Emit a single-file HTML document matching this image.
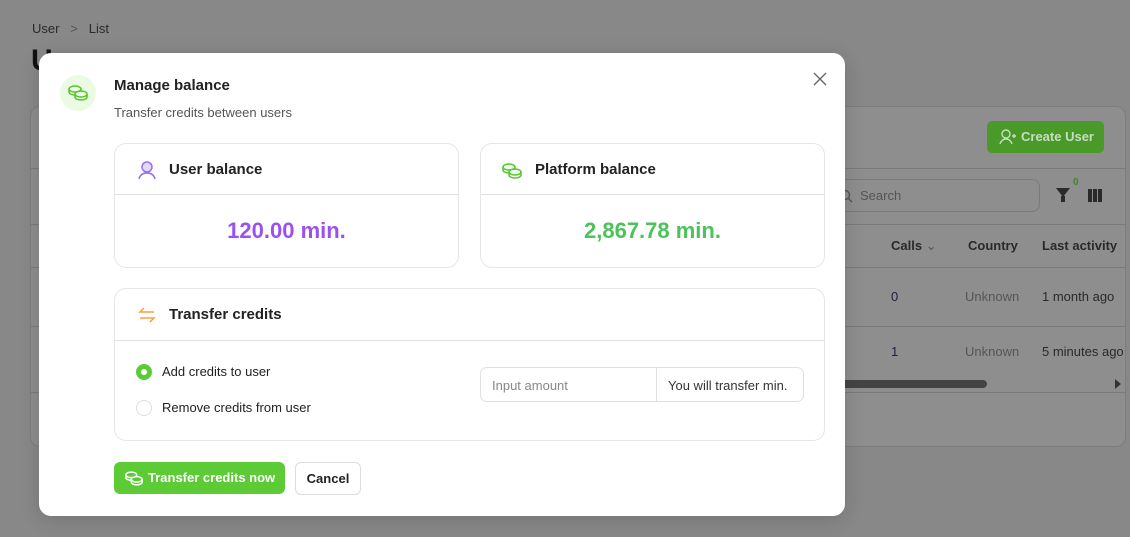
<!DOCTYPE html>
<html><head><style>
*{box-sizing:border-box;margin:0;padding:0}
body{width:1130px;height:537px;overflow:hidden;background:#888;font-family:"Liberation Sans",sans-serif;position:relative;color:#1a1a1a}
.a{position:absolute}
.bg{color:#2a2a2a;font-size:13px}
.card{position:absolute;background:#fff;border:1px solid #e6e6e6;border-radius:12px}
.hl{position:absolute;left:0;right:0;height:1px;background:#e0e0e0}
</style></head><body>
<div class="a bg" style="left:32px;top:21px">User&nbsp;&nbsp;&nbsp;<span style="color:#555">&gt;</span>&nbsp;&nbsp;&nbsp;List</div>
<div class="a" style="left:31px;top:44px;font-size:30px;font-weight:bold;color:#111">U</div>
<div class="a" style="left:30px;top:106px;width:1096px;height:341px;background:#8e8e8e;border:1px solid #7d7d7d;border-radius:10px">
 <div class="a" style="left:0;right:0;top:61px;height:1px;background:#7a7a7a"></div>
 <div class="a" style="left:0;right:0;top:117px;height:1px;background:#7a7a7a"></div>
 <div class="a" style="left:0;right:0;top:160px;height:1px;background:#7a7a7a"></div>
 <div class="a" style="left:0;right:0;top:219px;height:1px;background:#7a7a7a"></div>
 <div class="a" style="left:0;right:0;top:285px;height:1px;background:#7a7a7a"></div>
</div>
<div class="a" style="left:987px;top:121px;width:117px;height:32px;background:#4a9a2a;border-radius:5px;color:#c8dcc0;font-size:13px;font-weight:bold;line-height:32px;padding-left:34px">Create User
 <svg class="a" style="left:12px;top:8px" width="18" height="16" viewBox="0 0 18 16" fill="none" stroke="#c8dcc0" stroke-width="1.4"><circle cx="7" cy="5" r="4"/><path d="M1 15c1-3 3-5 6-5s5 2 6 5M13 7h4M15 5v4"/></svg></div>
<div class="a" style="left:830px;top:179px;width:210px;height:33px;border:1px solid #7a7a7a;border-radius:8px;color:#555;font-size:13px;line-height:31px;padding-left:29px">Search
 <svg class="a" style="left:8px;top:9px" width="14" height="14" viewBox="0 0 14 14" fill="none" stroke="#555" stroke-width="1.4"><circle cx="6" cy="6" r="4.5"/><path d="M9.5 9.5l3.5 3.5"/></svg></div>
<div class="a" style="left:1056px;top:188px;width:0;height:0;border-left:7px solid transparent;border-right:7px solid transparent;border-top:9px solid #2a2a2a"></div>
<div class="a" style="left:1061px;top:196px;width:4px;height:6px;background:#2a2a2a"></div>
<div class="a" style="left:1073px;top:177px;font-size:10px;color:#3a8a2a;font-weight:bold">0</div>
<div class="a" style="left:1088px;top:189px;width:4px;height:13px;background:#2a2a2a"></div>
<div class="a" style="left:1093px;top:189px;width:4px;height:13px;background:#2a2a2a"></div>
<div class="a" style="left:1098px;top:189px;width:4px;height:13px;background:#2a2a2a"></div>
<div class="a bg" style="left:891px;top:238px;font-weight:bold">Calls <span style="font-weight:normal;color:#555">⌄</span></div>
<div class="a bg" style="left:968px;top:238px;font-weight:bold">Country</div>
<div class="a bg" style="left:1042px;top:238px;font-weight:bold">Last activity</div>
<div class="a bg" style="left:891px;top:289px;color:#202040">0</div>
<div class="a bg" style="left:965px;top:289px;color:#555">Unknown</div>
<div class="a bg" style="left:1042px;top:289px">1 month ago</div>
<div class="a bg" style="left:891px;top:344px;color:#202040">1</div>
<div class="a bg" style="left:965px;top:344px;color:#555">Unknown</div>
<div class="a bg" style="left:1042px;top:344px">5 minutes ago</div>
<div class="a" style="left:840px;top:380px;width:147px;height:8px;background:#444;border-radius:4px"></div>
<div class="a" style="left:1115px;top:379px;width:0;height:0;border-top:5px solid transparent;border-bottom:5px solid transparent;border-left:6px solid #333"></div>

<div class="a" style="left:39px;top:53px;width:806px;height:463px;background:#fff;border-radius:12px;box-shadow:0 4px 20px rgba(0,0,0,.15)">
 <div class="a" style="left:21px;top:22px;width:36px;height:36px;border-radius:50%;background:#ebfbe3">
  <svg class="a" style="left:7px;top:9px" width="22" height="18" viewBox="0 0 22 18" fill="none" stroke="#58c332" stroke-width="1.5"><ellipse cx="8" cy="5" rx="6" ry="3"/><path d="M2 5v3c0 1.7 2.7 3 6 3"/><ellipse cx="14" cy="10" rx="6" ry="3" fill="#ebfbe3"/><path d="M8 10v3c0 1.7 2.7 3 6 3s6-1.3 6-3v-3"/></svg>
 </div>
 <div class="a" style="left:75px;top:24px;font-size:15px;font-weight:bold;color:#222">Manage balance</div>
 <div class="a" style="left:75px;top:52px;font-size:13px;color:#555">Transfer credits between users</div>
 <svg class="a" style="left:774px;top:19px" width="14" height="14" viewBox="0 0 14 14" stroke="#666" stroke-width="1.4"><path d="M1 1l12 12M13 1L1 13"/></svg>

 <div class="card" style="left:75px;top:90px;width:345px;height:125px">
  <svg class="a" style="left:22px;top:16px" width="20" height="20" viewBox="0 0 20 20" fill="none" stroke="#9a6cf0" stroke-width="1.5"><circle cx="10" cy="7" r="5" fill="#e4d9fc"/><path d="M2 19c1-4 4-6 8-6s7 2 8 6"/></svg>
  <div class="a" style="left:54px;top:17px;font-size:15px;font-weight:bold;color:#222">User balance</div>
  <div class="hl" style="top:50px"></div>
  <div class="a" style="left:0;right:0;top:74px;text-align:center;font-size:22px;font-weight:bold;color:#9b51f0">120.00 min.</div>
 </div>
 <div class="card" style="left:441px;top:90px;width:345px;height:125px">
  <svg class="a" style="left:20px;top:18px" width="22" height="18" viewBox="0 0 22 18" fill="none" stroke="#58c332" stroke-width="1.5"><ellipse cx="8" cy="5" rx="6" ry="3" fill="#ebfbe3"/><path d="M2 5v3c0 1.7 2.7 3 6 3"/><ellipse cx="14" cy="10" rx="6" ry="3" fill="#ebfbe3"/><path d="M8 10v3c0 1.7 2.7 3 6 3s6-1.3 6-3v-3"/></svg>
  <div class="a" style="left:54px;top:17px;font-size:15px;font-weight:bold;color:#222">Platform balance</div>
  <div class="hl" style="top:50px"></div>
  <div class="a" style="left:0;right:0;top:74px;text-align:center;font-size:22px;font-weight:bold;color:#4cc25a">2,867.78 min.</div>
 </div>

 <div class="card" style="left:75px;top:235px;width:711px;height:153px">
  <svg class="a" style="left:23px;top:17px" width="18" height="18" viewBox="0 0 18 18" fill="none" stroke="#f5a040" stroke-width="1.5"><path d="M16 6H2l4-4"/><path d="M2 12h14l-4 4"/></svg>
  <div class="a" style="left:54px;top:17px;font-size:15px;font-weight:bold;color:#222">Transfer credits</div>
  <div class="hl" style="top:51px"></div>
  <div class="a" style="left:21px;top:75px;width:16px;height:16px;border-radius:50%;background:#5ccb36"><div class="a" style="left:5px;top:5px;width:6px;height:6px;border-radius:50%;background:#fff"></div></div>
  <div class="a" style="left:47px;top:75px;font-size:13px;color:#222">Add credits to user</div>
  <div class="a" style="left:21px;top:111px;width:16px;height:16px;border-radius:50%;border:1px solid #ddd"></div>
  <div class="a" style="left:47px;top:111px;font-size:13px;color:#222">Remove credits from user</div>
  <div class="a" style="left:365px;top:78px;width:324px;height:35px;border:1px solid #e0e0e0;border-radius:7px">
   <div class="a" style="left:11px;top:10px;font-size:13px;color:#888">Input amount</div>
   <div class="a" style="left:175px;top:0;bottom:0;width:1px;background:#e0e0e0"></div>
   <div class="a" style="left:187px;top:10px;font-size:13px;color:#333">You will transfer min.</div>
  </div>
 </div>

 <div class="a" style="left:75px;top:409px;width:171px;height:32px;background:#5ccb36;border-radius:6px;color:#fff;font-size:13px;font-weight:bold;line-height:32px;padding-left:34px">Transfer credits now
  <svg class="a" style="left:10px;top:8px" width="20" height="17" viewBox="0 0 22 18" fill="none" stroke="#fff" stroke-width="1.6"><ellipse cx="8" cy="5" rx="6" ry="3"/><path d="M2 5v3c0 1.7 2.7 3 6 3"/><ellipse cx="14" cy="10" rx="6" ry="3" fill="#5ccb36"/><path d="M8 10v3c0 1.7 2.7 3 6 3s6-1.3 6-3v-3"/></svg>
 </div>
 <div class="a" style="left:256px;top:409px;width:66px;height:33px;border:1px solid #ddd;border-radius:6px;font-size:13px;font-weight:bold;line-height:31px;text-align:center;color:#222">Cancel</div>
</div>
</body></html>
